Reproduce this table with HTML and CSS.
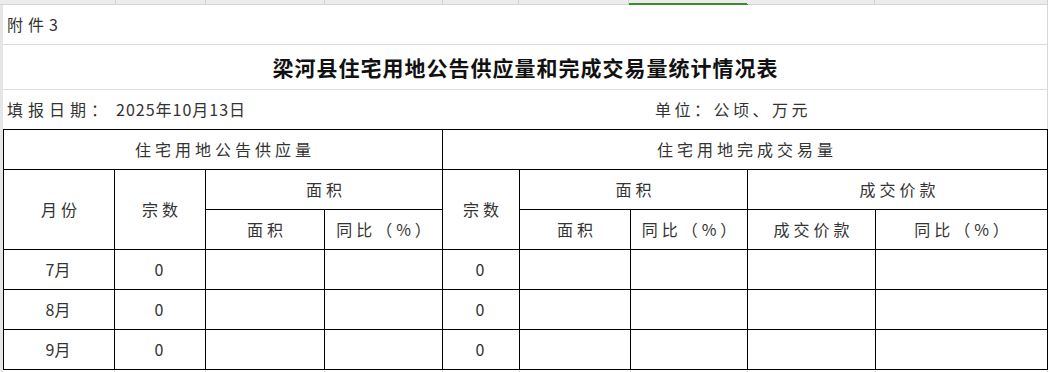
FILE: index.html
```html
<!DOCTYPE html>
<html lang="zh-CN">
<head>
<meta charset="utf-8">
<title>梁河县住宅用地公告供应量和完成交易量统计情况表</title>
<link rel="stylesheet" href="styles.css">
</head>
<body>
<div class="colbar">
  <div class="ch ch1"></div>
  <div class="ch ch2"></div>
  <div class="ch ch3"></div>
  <div class="ch ch4"></div>
  <div class="ch ch5"></div>
  <div class="ch ch6"></div>
  <div class="ch ch7 selected"></div>
  <div class="ch ch8"></div>
  <div class="ch ch9"></div>
</div>
<div class="sheet">
  <div class="gutter"></div>
  <div class="main">
    <div class="row r1"><span class="lbl">附件3</span></div>
    <div class="row r2"><h1 class="title">梁河县住宅用地公告供应量和完成交易量统计情况表</h1></div>
    <div class="row r3">
      <div class="date"><span class="lbl">填报日期：</span><span class="dval">2025年10月13日</span></div>
      <div class="unit">单位：公顷、万元</div>
    </div>
    <div class="grid">
      <div class="c h g1">住宅用地公告供应量</div>
      <div class="c h g2">住宅用地完成交易量</div>
      <div class="c h m1">月份</div>
      <div class="c h n1">宗数</div>
      <div class="c h a1">面积</div>
      <div class="c h n2">宗数</div>
      <div class="c h a2">面积</div>
      <div class="c h p2">成交价款</div>
      <div class="c h">面积</div>
      <div class="c h">同比（%）</div>
      <div class="c h">面积</div>
      <div class="c h">同比（%）</div>
      <div class="c h">成交价款</div>
      <div class="c h">同比（%）</div>

      <div class="c d">7月</div><div class="c d">0</div><div class="c d"></div><div class="c d"></div><div class="c d">0</div><div class="c d"></div><div class="c d"></div><div class="c d"></div><div class="c d"></div>
      <div class="c d">8月</div><div class="c d">0</div><div class="c d"></div><div class="c d"></div><div class="c d">0</div><div class="c d"></div><div class="c d"></div><div class="c d"></div><div class="c d"></div>
      <div class="c d">9月</div><div class="c d">0</div><div class="c d"></div><div class="c d"></div><div class="c d">0</div><div class="c d"></div><div class="c d"></div><div class="c d"></div><div class="c d"></div>
    </div>
    <div class="tail">
      <div class="tc"></div><div class="tc"></div><div class="tc"></div><div class="tc"></div><div class="tc"></div><div class="tc"></div><div class="tc"></div><div class="tc"></div><div class="tc"></div>
    </div>
  </div>
</div>
</body>
</html>
```

FILE: styles.css
```css
* { box-sizing: border-box; }
html, body { margin: 0; padding: 0; background: #fff; }
body {
  width: 1048px;
  height: 372px;
  overflow: hidden;
  font-family: "Noto Sans CJK SC", "Noto Sans", sans-serif;
  color: #333;
}

/* column header strip */
.colbar {
  display: flex;
  height: 5px;
  background: #ececec;
  border-bottom: 1px solid #d4d4d4;
}
.ch { height: 4px; border-right: 1px solid #d2d2d2; flex: none; }
.ch1 { width: 116px; }
.ch2 { width: 90px; }
.ch3 { width: 119px; }
.ch4 { width: 118px; }
.ch5 { width: 76px; }
.ch6 { width: 110px; }
.ch7 { width: 119px; }
.ch8 { width: 127px; }
.ch9 { width: 173px; }
.ch.selected {
  border-right-color: #ececec;
  box-shadow: inset 0 -1px 0 #3d8b2c, 0 1px 0 #3d8b2c;
}

.sheet { display: flex; }
.gutter { width: 3px; flex: none; background: #e6e6e6; }
.main { width: 1045px; flex: none; }

.row {
  display: flex;
  align-items: center;
  border-right: 1px solid #d8d8d8;
}
.r1 { height: 40px; border-bottom: 1px solid #dcdcdc; padding-left: 4px; padding-bottom: 2px; }
.r2 { height: 45px; border-bottom: 1px solid #dcdcdc; justify-content: center; }
.r3 { height: 39px; padding-left: 4px; padding-bottom: 1px; }

.lbl { font-size: 16px; letter-spacing: 5px; }
.title {
  margin: 0;
  font-size: 21px;
  font-weight: 700;
  letter-spacing: 1px;
  color: #111;
  padding-left: 1px;
}
.date { width: 648px; flex: none; display: flex; align-items: center; }
.dval { font-size: 16px; letter-spacing: 1px; margin-left: 4px; }
.unit { font-size: 16px; letter-spacing: 3.5px; }

/* table */
.grid {
  display: grid;
  grid-template-columns: 111px 91px 119px 118px 77px 111px 117px 128px 172px;
  grid-template-rows: repeat(6, 40px);
  border-top: 1px solid #000;
  border-left: 1px solid #000;
  width: 1045px;
}
.c {
  border-right: 1px solid #000;
  border-bottom: 1px solid #000;
  display: flex;
  align-items: center;
  justify-content: center;
  font-size: 16px;
  padding-bottom: 2px;
}
.h { letter-spacing: 4px; padding-left: 4px; }
.d { letter-spacing: 0; padding-right: 2px; }
.g1 { grid-column: 1 / 5; }
.g2 { grid-column: 5 / 10; }
.m1 { grid-row: 2 / 4; grid-column: 1; }
.n1 { grid-row: 2 / 4; grid-column: 2; }
.a1 { grid-column: 3 / 5; }
.n2 { grid-row: 2 / 4; grid-column: 5; }
.a2 { grid-column: 6 / 8; }
.p2 { grid-column: 8 / 10; }

.tail {
  display: grid;
  grid-template-columns: 111px 91px 119px 118px 77px 111px 117px 128px 172px;
  height: 3px;
  padding-left: 1px;
}
.tc { border-right: 1px solid #e0e0e0; }
```
